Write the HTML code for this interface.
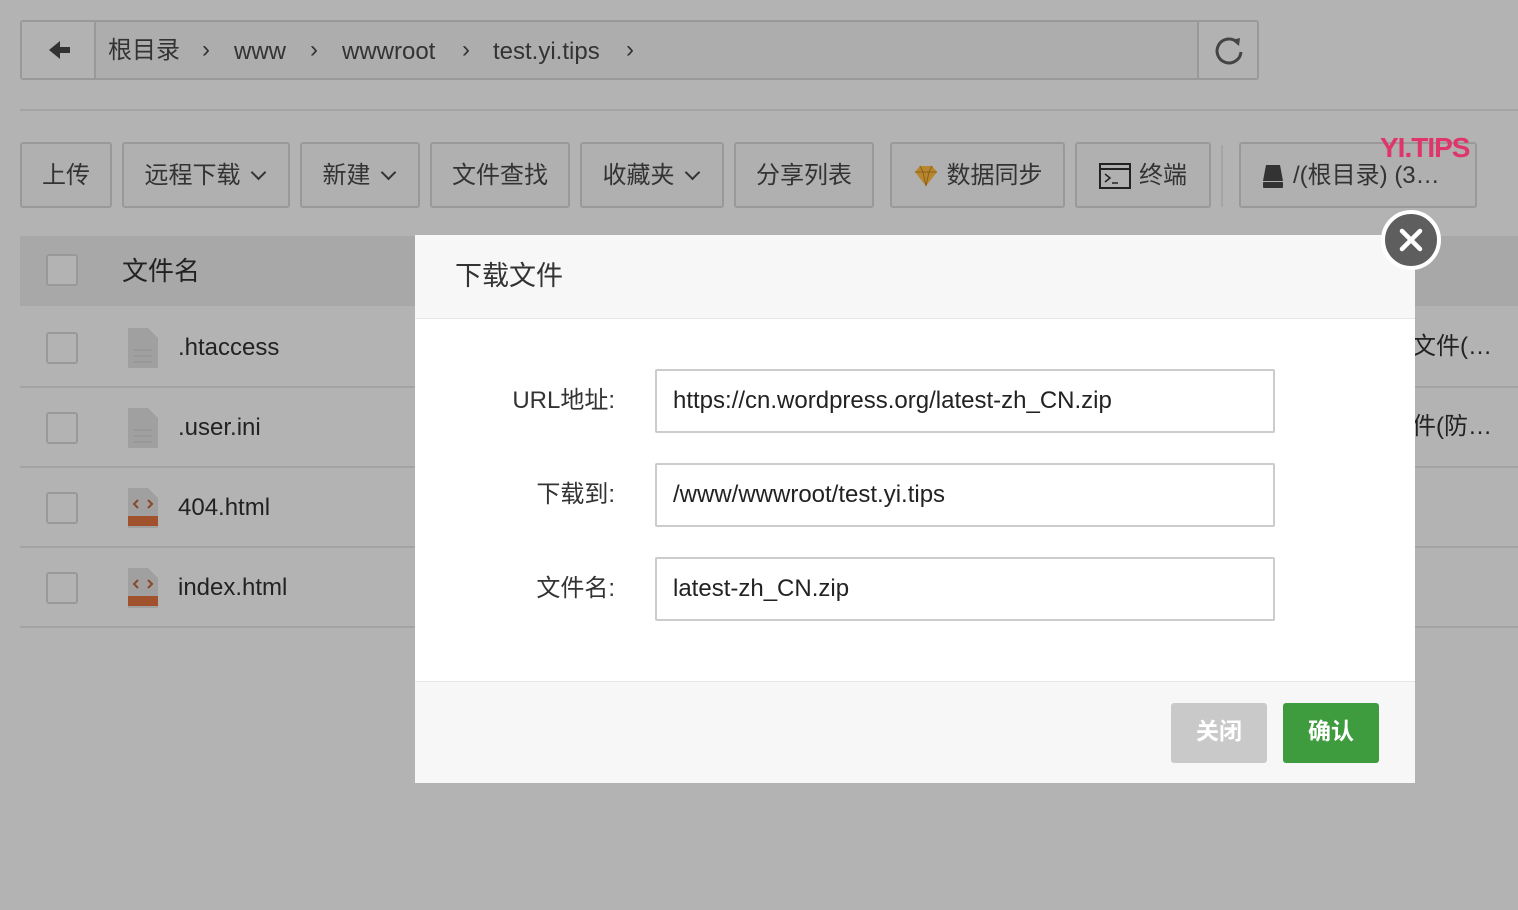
<!DOCTYPE html>
<html><head><meta charset="utf-8"><style>
*{box-sizing:border-box;margin:0;padding:0}
body{width:1518px;height:910px;background:#b3b3b3;font-family:"Liberation Sans","Noto Sans CJK SC",sans-serif;color:#222;position:relative;overflow:hidden}
.abs{position:absolute}
.crumb{left:20px;top:20px;width:1239px;height:60px;border:2px solid #999;border-radius:3px;background:#adadad}
.crumb .back{position:absolute;left:0;top:0;width:74px;height:56px;border-right:2px solid #999;background:#b2b2b2}
.crumb .ref{position:absolute;right:0;top:0;width:60px;height:56px;border-left:2px solid #999;background:#b2b2b2}
.ct{position:absolute;top:13px;font-size:24px;line-height:30px;height:30px;color:#333}
.hr{left:20px;top:109px;width:1498px;height:2px;background:#a5a5a5}
.btn{position:absolute;top:142px;height:66px;border:2px solid #999;border-radius:3px;background:#b0b0b0;font-size:24px;line-height:30px;color:#333;display:flex;align-items:center;justify-content:center;gap:8px;padding-top:2px}
.chev{display:inline-block;width:11px;height:11px;border-right:2px solid #333;border-bottom:2px solid #333;transform:rotate(45deg);margin:-8px 4px 0 4px}
.thead{left:20px;top:236px;width:1498px;height:70px;background:#a8a8a8}
.row{left:20px;width:1498px;height:80px;border-bottom:2px solid #a3a3a3}
.cb{position:absolute;left:26px;width:32px;height:32px;border:2px solid #999;border-radius:3px;background:#b3b3b3}
.fn{position:absolute;left:158px;font-size:24px;line-height:30px;color:#222}
.modal{left:415px;top:235px;width:1000px;height:548px;background:#fff}
.mh{position:absolute;left:0;top:0;width:1000px;height:84px;background:#f7f7f7;border-bottom:1px solid #e6e6e6}
.mf{position:absolute;left:0;bottom:0;width:1000px;height:102px;background:#f7f7f7;border-top:1px solid #e6e6e6}
.lab{position:absolute;right:800px;font-size:24px;line-height:30px;color:#333;text-align:right}
.inp{position:absolute;left:240px;width:620px;height:64px;border:2px solid #ccc;border-radius:2px;font-size:24px;line-height:30px;padding:15px 16px 0;color:#222}
</style></head><body>
<div class="abs crumb">
 <div class="back"><svg width="74" height="56"><path d="M27 28 L38 19 V25 H48 V31 H38 V37 Z" fill="#333"/></svg></div>
 <span class="ct" style="left:86px;top:14px">根目录</span><span class="ct" style="left:180px">›</span>
 <span class="ct" style="left:212px;top:15px">www</span><span class="ct" style="left:288px">›</span>
 <span class="ct" style="left:320px;top:15px">wwwroot</span><span class="ct" style="left:440px">›</span>
 <span class="ct" style="left:471px;top:15px">test.yi.tips</span><span class="ct" style="left:604px">›</span>
 <div class="ref"><svg width="60" height="56"><path d="M38 20 A12 12 0 1 0 42 30" fill="none" stroke="#444" stroke-width="3"/><path d="M33 18 L41 16 L40 24 Z" fill="#444"/></svg></div>
</div>
<div class="abs hr"></div>
<div class="btn" style="left:20px;width:92px">上传</div>
<div class="btn" style="left:122px;width:168px">远程下载<span class="chev"></span></div>
<div class="btn" style="left:300px;width:120px">新建<span class="chev"></span></div>
<div class="btn" style="left:430px;width:140px">文件查找</div>
<div class="btn" style="left:580px;width:144px">收藏夹<span class="chev"></span></div>
<div class="btn" style="left:734px;width:140px">分享列表</div>
<div class="btn" style="left:890px;width:175px"><svg width="26" height="24"><path d="M2 8 L7 2 H19 L24 8 L13 22 Z" fill="#b8862b"/><path d="M2 8 H24 M7 2 L10 8 L13 22 L16 8 L19 2" fill="none" stroke="#8a6020" stroke-width="1"/></svg>数据同步</div>
<div class="btn" style="left:1075px;width:136px"><svg width="32" height="26"><rect x="1" y="1" width="30" height="24" fill="none" stroke="#222" stroke-width="2"/><path d="M1 6 H31" stroke="#222" stroke-width="2"/><path d="M6 11 L11 15 L6 19 M13 20 H19" fill="none" stroke="#222" stroke-width="1.5"/></svg> 终端</div>
<div class="abs" style="left:1221px;top:145px;width:2px;height:62px;background:#a5a5a5"></div>
<div class="btn" style="left:1239px;width:238px;justify-content:flex-start;padding-left:20px"><svg width="24" height="26"><path d="M5 2 H19 L22 18 H2 Z" fill="#333"/><rect x="2" y="19" width="20" height="6" rx="1" fill="#333"/></svg>/(根目录) (3…</div>
<div class="abs" style="left:1380px;top:132px;font-size:28px;font-weight:900;color:#e0356b;letter-spacing:-1px">YI.TIPS</div>
<div class="abs thead"><div class="cb" style="top:18px"></div><span class="abs" style="left:102px;top:20px;font-size:26px;line-height:30px">文件名</span></div>
<div class="abs row" style="top:308px"><div class="cb" style="top:24px"></div><svg class="abs" style="left:108px;top:20px" width="30" height="40"><path d="M0 0 H20 L30 10 V40 H0Z" fill="#a0a0a0"/><path d="M6 22H24M6 28H24M6 34H24" stroke="#909090"/></svg><span class="fn" style="top:25px">.htaccess</span><span class="abs" style="left:1392px;top:24px;font-size:24px;line-height:30px">文件(…</span></div>
<div class="abs row" style="top:388px"><div class="cb" style="top:24px"></div><svg class="abs" style="left:108px;top:20px" width="30" height="40"><path d="M0 0 H20 L30 10 V40 H0Z" fill="#a0a0a0"/><path d="M6 22H24M6 28H24M6 34H24" stroke="#909090"/></svg><span class="fn" style="top:25px">.user.ini</span><span class="abs" style="left:1392px;top:24px;font-size:24px;line-height:30px">件(防…</span></div>
<div class="abs row" style="top:468px"><div class="cb" style="top:24px"></div><svg class="abs" style="left:108px;top:20px" width="30" height="40"><path d="M0 0 H20 L30 10 V40 H0Z" fill="#a0a0a0"/><path d="M10 12 L6 16 L10 20 M20 12 L24 16 L20 20" fill="none" stroke="#8a4a2a" stroke-width="2"/><rect x="0" y="28" width="30" height="10" fill="#a0522d"/></svg><span class="fn" style="top:25px">404.html</span></div>
<div class="abs row" style="top:548px"><div class="cb" style="top:24px"></div><svg class="abs" style="left:108px;top:20px" width="30" height="40"><path d="M0 0 H20 L30 10 V40 H0Z" fill="#a0a0a0"/><path d="M10 12 L6 16 L10 20 M20 12 L24 16 L20 20" fill="none" stroke="#8a4a2a" stroke-width="2"/><rect x="0" y="28" width="30" height="10" fill="#a0522d"/></svg><span class="fn" style="top:25px">index.html</span></div>
<div class="abs modal">
 <div class="mh"><span class="abs" style="left:40px;top:25px;font-size:27px;line-height:32px;color:#333">下载文件</span></div>
 <span class="lab" style="top:151px">URL地址:</span>
 <div class="inp" style="top:134px">https://cn.wordpress.org/latest-zh_CN.zip</div>
 <span class="lab" style="top:245px">下载到:</span>
 <div class="inp" style="top:228px">/www/wwwroot/test.yi.tips</div>
 <span class="lab" style="top:339px">文件名:</span>
 <div class="inp" style="top:322px">latest-zh_CN.zip</div>
 <div class="mf">
  <div class="abs" style="left:756px;top:21px;width:96px;height:60px;background:#c9c9c9;border-radius:3px;color:#fff;font-size:23px;font-weight:bold;text-align:center;line-height:56px">关闭</div>
  <div class="abs" style="left:868px;top:21px;width:96px;height:60px;background:#3e9b3e;border-radius:3px;color:#fff;font-size:23px;font-weight:bold;text-align:center;line-height:56px">确认</div>
 </div>
</div>
<svg class="abs" style="left:1380px;top:209px" width="62" height="62"><circle cx="31" cy="31" r="28" fill="#5e5e5e" stroke="#fff" stroke-width="4"/><path d="M22 22 L40 40 M40 22 L22 40" stroke="#fff" stroke-width="4.5" stroke-linecap="round"/></svg>
</body></html>
